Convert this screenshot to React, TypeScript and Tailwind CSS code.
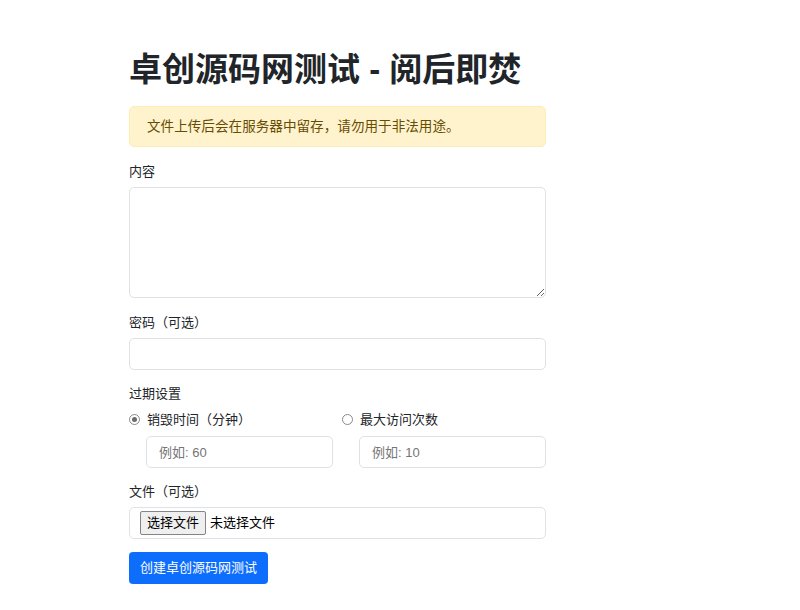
import { useState } from 'react';

const font = { fontFamily: '"Liberation Sans", "Noto Sans CJK SC", sans-serif' };

function Radio({ checked, label, onClick }: { checked: boolean; label: string; onClick: () => void }) {
  return (
    <button type="button" onClick={onClick} className="flex h-[21px] items-center text-[13px] text-[#212529]">
      <span className="flex h-[11px] w-[11px] items-center justify-center rounded-full border border-[#8a8a8a] bg-white">
        {checked && <span className="h-[5px] w-[5px] rounded-full bg-[#6b6b6b]"></span>}
      </span>
      <span className="ml-[7px]">{label}</span>
    </button>
  );
}

export default function App() {
  const [mode, setMode] = useState<'time' | 'visits'>('time');

  return (
    <div className="min-h-[610px] bg-white text-[#212529]" style={font}>
      <div className="ml-[129px] w-[417px] pt-[52px]">
        <h1 className="text-[33px] font-semibold leading-[36px]">卓创源码网测试 - 阅后即焚</h1>

        <div className="mt-[18px] rounded-[5px] border border-[#ffecb5] bg-[#fff3cd] px-[17px] py-[9px] text-[13.6px] leading-[21px] text-[#664d03]">
          文件上传后会在服务器中留存，请勿用于非法用途。
        </div>

        <label className="mt-[14px] mb-[5px] block text-[13px] leading-[21px]">内容</label>
        <textarea className="block h-[111px] w-full resize-y rounded-[5px] border border-[#dee2e6] bg-white px-3 py-2 text-[13px] outline-none"></textarea>

        <label className="mt-[14px] mb-[5px] block text-[13px] leading-[21px]">密码（可选）</label>
        <input
          type="password"
          className="block h-[32px] w-full rounded-[5px] border border-[#dee2e6] bg-white px-3 text-[13px] outline-none"
        />

        <label className="mt-[13px] mb-[5px] block text-[13px] leading-[21px]">过期设置</label>
        <div className="grid grid-cols-2 gap-x-[9px]">
          <div>
            <Radio checked={mode === 'time'} label="销毁时间（分钟）" onClick={() => setMode('time')} />
            <input
              type="number"
              placeholder="例如: 60"
              className="mt-[6px] ml-[17px] block h-[32px] w-[187px] rounded-[5px] border border-[#dee2e6] bg-white px-[12px] text-[13px] outline-none placeholder:text-[#757575]"
            />
          </div>
          <div>
            <Radio checked={mode === 'visits'} label="最大访问次数" onClick={() => setMode('visits')} />
            <input
              type="number"
              placeholder="例如: 10"
              className="mt-[6px] ml-[17px] block h-[32px] w-[187px] rounded-[5px] border border-[#dee2e6] bg-white px-[12px] text-[13px] outline-none placeholder:text-[#757575]"
            />
          </div>
        </div>

        <label className="mt-[13px] mb-[5px] block text-[13px] leading-[21px]">文件（可选）</label>
        <div className="flex h-[32px] w-full items-center rounded-[5px] border border-[#dee2e6] bg-white pl-[10px] text-[13px]">
          <span className="flex h-[24px] items-center rounded-[2px] border border-[#858585] bg-[#efefef] px-[6px] text-black">
            选择文件
          </span>
          <span className="ml-[4px] text-black">未选择文件</span>
        </div>

        <button
          type="button"
          className="mt-[13px] flex h-[32px] items-center rounded-[4px] bg-[#0d6efd] px-[11px] text-[13px] text-white"
        >
          创建卓创源码网测试
        </button>
      </div>
    </div>
  );
}
